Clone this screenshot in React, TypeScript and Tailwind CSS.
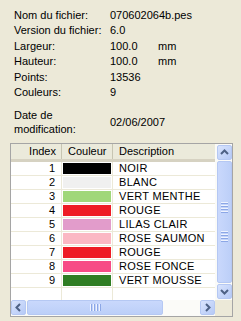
import React from "react";

const info: [string, string, string?][] = [
  ["Nom du fichier:", "070602064b.pes"],
  ["Version du fichier:", "6.0"],
  ["Largeur:", "100.0", "mm"],
  ["Hauteur:", "100.0", "mm"],
  ["Points:", "13536"],
  ["Couleurs:", "9"],
];

const rows: [number, string, string][] = [
  [1, "#000000", "NOIR"],
  [2, "#f0f0f0", "BLANC"],
  [3, "#a0d77a", "VERT MENTHE"],
  [4, "#ee1c25", "ROUGE"],
  [5, "#e29ccb", "LILAS CLAIR"],
  [6, "#fbb8c4", "ROSE SAUMON"],
  [7, "#ee1c25", "ROUGE"],
  [8, "#f74b86", "ROSE FONCE"],
  [9, "#2f7d23", "VERT MOUSSE"],
];

function Btn({ dir }: { dir: "up" | "down" | "left" | "right" }) {
  const paths: Record<string, string> = {
    up: "M4 9 L7.5 5.5 L11 9",
    down: "M4 6 L7.5 9.5 L11 6",
    left: "M9 4 L5.5 7.5 L9 11",
    right: "M6 4 L9.5 7.5 L6 11",
  };
  return (
    <div className="w-[15px] h-[15px] rounded-[2px] border border-[#b5c8f3] bg-gradient-to-br from-[#d9e4fd] to-[#b5c9f6] flex items-center justify-center">
      <svg width="15" height="15" viewBox="0 0 15 15" className="-m-px">
        <path d={paths[dir]} fill="none" stroke="#4d6185" strokeWidth="2" />
      </svg>
    </div>
  );
}

function Grip({ vertical }: { vertical: boolean }) {
  return vertical ? (
    <div className="flex flex-col gap-[1px]">
      {[0, 1, 2, 3].map((i) => (
        <div key={i} className="w-[7px] h-[1px] bg-[#eef3fe] border-b border-[#8ca7e6] box-content" />
      ))}
    </div>
  ) : (
    <div className="flex flex-row gap-[1px]">
      {[0, 1, 2, 3].map((i) => (
        <div key={i} className="h-[7px] w-[1px] bg-[#eef3fe] border-r border-[#8ca7e6] box-content" />
      ))}
    </div>
  );
}

export default function App() {
  return (
    <div className="w-[241px] h-[321px] bg-[#ece9d8] text-[11px] text-black overflow-hidden font-['Liberation_Sans',Arial,sans-serif]">
      <div className="pt-[8px] pl-[14px]">
        {info.map(([l, v, u]) => (
          <div key={l} className="grid grid-cols-[96px_48px_auto] h-[15.4px] leading-[15.4px]">
            <span>{l}</span>
            <span>{v}</span>
            <span>{u ?? ""}</span>
          </div>
        ))}
        <div className="grid grid-cols-[96px_auto] mt-[7.6px] items-center">
          <span className="leading-[14px]">
            Date de
            <br />
            modification:
          </span>
          <span>02/06/2007</span>
        </div>
      </div>

      <div className="mt-[7px] ml-[10px] w-[223px] h-[174px] border border-[#a5a5a5] flex flex-col">
        <div className="flex flex-row h-[156px]">
          {/* list area */}
          <div className="w-[204px] h-full bg-white flex flex-col">
            <div className="h-[18px] flex flex-row bg-[#ebeadb] border-b-[3px] border-[#d6d2c2] leading-[15px]">
              <div className="w-[51px] text-right pr-[5px] border-r border-[#c7c5b2]">Index</div>
              <div className="w-[51px] pl-[6px] border-r border-[#c7c5b2]">Couleur</div>
              <div className="flex-1 pl-[6px]">Description</div>
            </div>
            {rows.map(([i, c, d]) => (
              <div key={i} className="h-[14px] flex flex-row border-b border-[#ece9d8] leading-[13px]">
                <div className="w-[51px] text-right pr-[6px] border-r border-[#ece9d8]">{i}</div>
                <div className="w-[51px] border-r border-[#ece9d8] p-[1px]">
                  <div className="w-full h-full" style={{ backgroundColor: c }} />
                </div>
                <div className="flex-1 pl-[6px] tracking-[0.3px]">{d}</div>
              </div>
            ))}
            <div className="flex-1 flex flex-row">
              <div className="w-[51px] border-r border-[#ece9d8]" />
              <div className="w-[51px] border-r border-[#ece9d8]" />
              <div className="flex-1" />
            </div>
          </div>
          {/* vertical scrollbar */}
          <div className="w-[17px] h-full bg-[#fbfbf8] flex flex-col items-center pl-[1px] py-[1px]">
            <Btn dir="up" />
            <div className="flex-1 w-[15px] my-[1px] rounded-[2px] border border-[#b5c8f3] bg-gradient-to-r from-[#c9d8fc] to-[#bccff8] flex flex-col items-center justify-center gap-[18px]">
              <Grip vertical />
              <Grip vertical />
            </div>
            <Btn dir="down" />
          </div>
        </div>
        {/* horizontal scrollbar */}
        <div className="flex-1 flex flex-row">
          <div className="w-[204px] bg-[#fbfbf8] flex flex-row items-center">
            <Btn dir="left" />
            <div className="w-[136px] h-[15px] mx-[1px] rounded-[2px] border border-[#b5c8f3] bg-gradient-to-b from-[#c9d8fc] to-[#bccff8] flex items-center justify-center">
              <Grip vertical={false} />
            </div>
            <div className="flex-1" />
            <Btn dir="right" />
          </div>
          <div className="flex-1 bg-[#ece9d8]" />
        </div>
      </div>
    </div>
  );
}
